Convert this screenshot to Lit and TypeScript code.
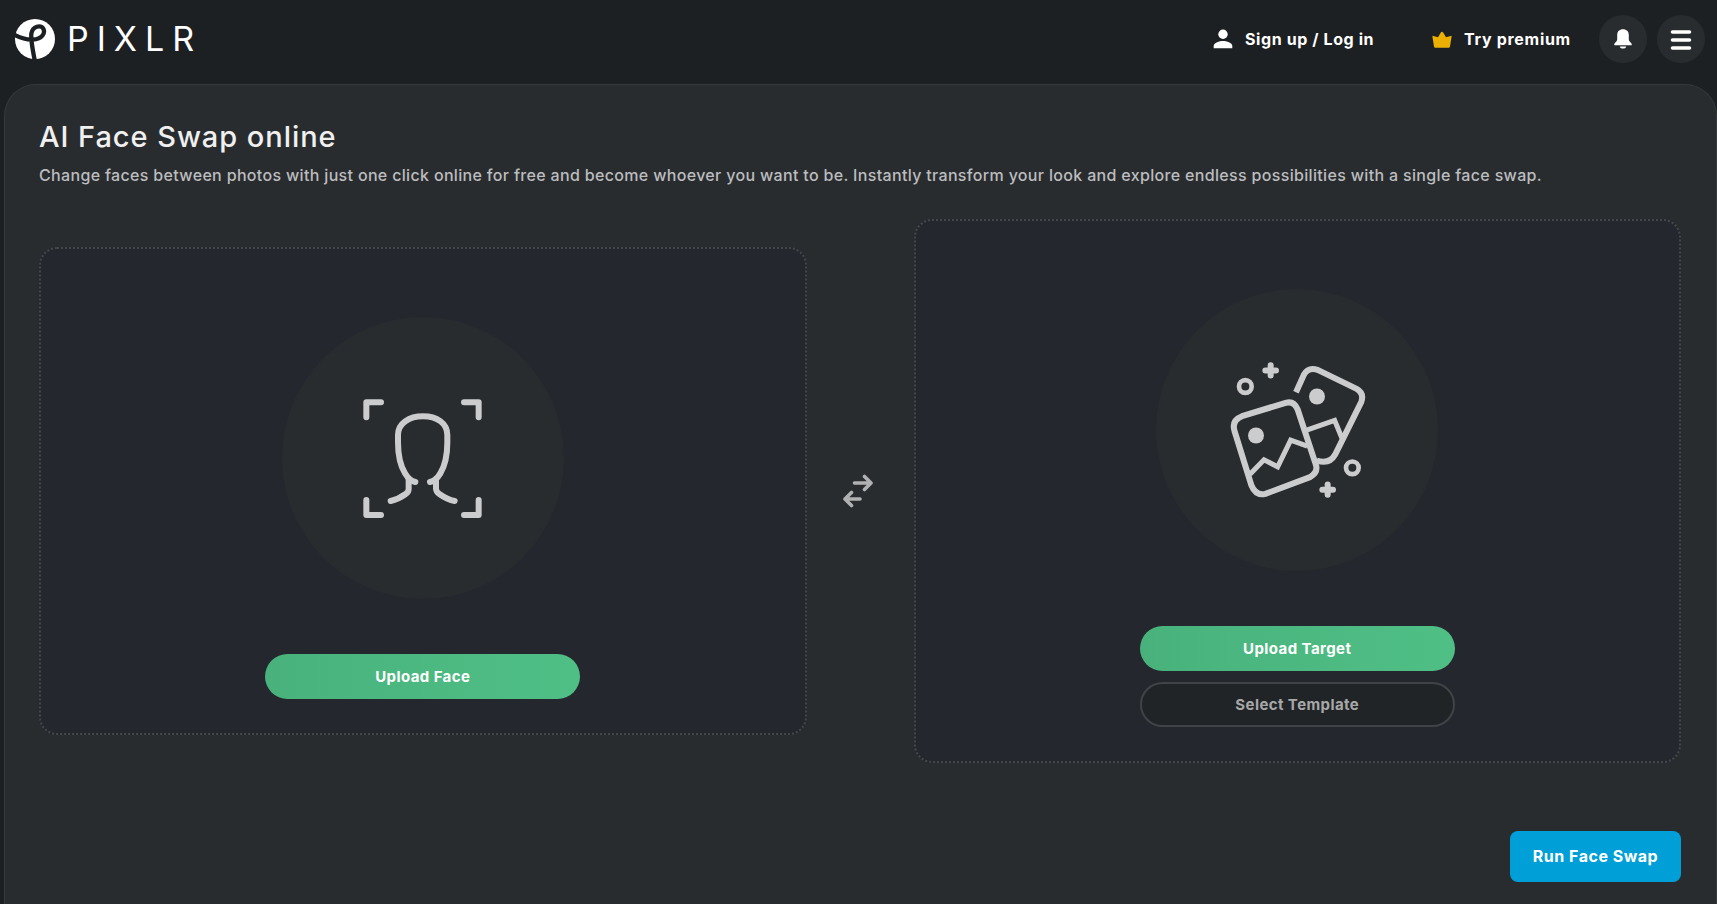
import {html, css, svg, LitElement} from 'lit';
import {customElement, property} from 'lit/decorators.js';

const faceIcon = svg`
<svg class="art" width="120" height="120" viewBox="99 81 360 360">
  <path d="M153 94H109V139M402 94H446V139M109 387V432H153M402 432H446V387"/>
  <path d="M256 333Q238 329 225 307C211 284 204 254 204 214V192C204 156 238 136 279 136C320 136 352 156 352 192V214C352 254 345 284 331 307Q318 329 300 333"/>
  <path d="M236 324V354Q236 363 227 369Q205 385 182 390M318 324V354Q319 363 328 369Q352 386 374 390"/>
</svg>`;

const photosIcon = svg`
<svg class="art" width="140" height="140" viewBox="81 58.5 420 420">
  <path d="M126 227L257 187Q282 180 293 207L347 371Q356 395 330 410L196 460Q167 467 154 434L104 273Q93 240 126 227Z"/>
  <path d="M150 401L192 358L233 379L272 299L322 317" class="miter"/>
  <path d="M288 155L312 102Q325 79 353 88L470 145Q493 158 484 184L405 343Q388 373 350 360" class="butt"/>
  <path d="M320 269L404 240L426 293" class="miter"/>
  <circle class="dot" cx="168" cy="285" r="24"/>
  <circle class="dot" cx="351" cy="168" r="24"/>
  <circle cx="136" cy="138" r="19" class="ring"/>
  <circle cx="457" cy="382" r="19" class="ring"/>
  <path d="M212 74V105M196 90H228M383 432V463M367 448H399"/>
</svg>`;

@customElement('upload-box')
class UploadBox extends LitElement {
  @property() kind = 'face';
  @property() label = '';
  @property() secondary = '';

  static styles = css`
    :host {
      box-sizing: border-box;
      display: flex;
      flex-direction: column;
      align-items: center;
      width: 767.5px;
      padding: 67px 0 34px;
      border: 2px dotted #45484b;
      border-radius: 18px;
      background: #24272e;
    }
    .circle {
      display: flex;
      align-items: center;
      justify-content: center;
      width: 282px;
      height: 282px;
      border-radius: 50%;
      background: #292c2f;
      margin: 1px 0 55px;
    }
    .art {
      fill: none;
      stroke: #cbccce;
      stroke-width: 18;
      stroke-linecap: round;
      stroke-linejoin: round;
    }
    .miter {
      stroke-width: 15;
      stroke-linecap: butt;
      stroke-linejoin: miter;
    }
    .butt {
      stroke-linecap: butt;
    }
    .ring {
      stroke-width: 14;
    }
    .dot {
      fill: #cbccce;
      stroke: none;
    }
    button {
      box-sizing: border-box;
      width: 315px;
      height: 45px;
      padding: 0 0 1px;
      border: none;
      border-radius: 23px;
      font: 700 15px Inter, sans-serif;
      letter-spacing: 0.42px;
      color: #fff;
      background: linear-gradient(90deg, #49b27c, #4fbf86);
    }
    .secondary {
      margin-top: 11px;
      border: 2px solid #414447;
      color: #a7a8a9;
      background: #212427;
    }
  `;

  render() {
    return html`
      <div class="circle">${this.kind === 'face' ? faceIcon : photosIcon}</div>
      <button>${this.label}</button>
      ${this.secondary ? html`<button class="secondary">${this.secondary}</button>` : ''}
    `;
  }
}

@customElement('app-root')
class AppRoot extends LitElement {
  static styles = css`
    :host {
      display: flex;
      flex-direction: column;
      box-sizing: border-box;
      height: 100vh;
      padding-left: 4px;
      overflow: hidden;
      background: #1d2022;
      font-family: Inter, sans-serif;
      color: #fff;
    }
    header {
      display: flex;
      align-items: center;
      flex: none;
      box-sizing: border-box;
      height: 84px;
      padding: 0 12px 6px 10px;
    }
    .logo {
      display: flex;
      align-items: center;
      gap: 11px;
      margin-right: auto;
    }
    .word {
      font-size: 34px;
      font-weight: 400;
      line-height: 40px;
      letter-spacing: 8px;
    }
    .link {
      display: flex;
      align-items: center;
      gap: 12px;
      font-size: 16px;
      font-weight: 700;
      line-height: 20px;
      white-space: nowrap;
    }
    .link span {
      margin-bottom: 1px;
    }
    .signup {
      width: 219px;
      letter-spacing: 0.6px;
    }
    .premium {
      width: 167px;
      letter-spacing: 0.7px;
    }
    .round {
      display: flex;
      align-items: center;
      justify-content: center;
      width: 48px;
      height: 48px;
      border-radius: 50%;
      background: #292c2f;
    }
    .round + .round {
      margin-left: 10px;
    }
    main {
      flex: 1;
      display: flex;
      flex-direction: column;
      padding: 34px 35px 0 34px;
      border: 1px solid #35393b;
      border-bottom: none;
      border-radius: 32px 32px 0 0;
      background: #292c2f;
    }
    h1 {
      margin: 0;
      font-size: 29px;
      font-weight: 500;
      line-height: 36px;
      letter-spacing: 0.95px;
      color: #f0f0f0;
    }
    p {
      margin: 10px 0 0;
      font-size: 16px;
      font-weight: 500;
      line-height: 20px;
      letter-spacing: 0.33px;
      white-space: nowrap;
      color: #bcbdbf;
    }
    .boxes {
      display: flex;
      align-items: center;
      justify-content: space-between;
      margin-top: 34px;
    }
    .swap {
      margin-right: 4px;
    }
    .run {
      align-self: flex-end;
      width: 171px;
      height: 51px;
      margin-top: 68px;
      padding: 0 0 1px;
      border: none;
      border-radius: 8px;
      font: 700 16px Inter, sans-serif;
      letter-spacing: 0.5px;
      color: #fff;
      background: #009fd8;
    }
  `;

  render() {
    return html`
      <header>
        <div class="logo">
          <svg width="42" height="42" viewBox="42 54 126 126">
            <circle cx="105" cy="117" r="60" fill="#fff"/>
            <path d="M42 104Q72 120 98 119C128 118 136 98 130 86C122 74 98 78 94 101C92 122 99 154 104 180" fill="none" stroke="#1d2022" stroke-width="13"/>
          </svg>
          <span class="word">PIXLR</span>
        </div>
        <div class="link signup">
          <svg width="20" height="20" viewBox="0 0 20 20" fill="#fff">
            <circle cx="10" cy="5.3" r="4.7"/>
            <path d="M.7 19.3V17C.7 13.8 6.5 12 10 12S19.3 13.8 19.3 17V19.3Z"/>
          </svg>
          <span>Sign up / Log in</span>
        </div>
        <div class="link premium">
          <svg width="20" height="17" viewBox="0 0 20 17" fill="#ebb000">
            <path d="M2 15.500L.4 5.600Q.3 4.600 1.300 4.900L6 6.300L9 1.300Q10 0 11 1.300L14 6.300L18.700 4.900Q19.700 4.600 19.600 5.600L18 15.500Q17.800 16.700 16.600 16.700H3.400Q2.200 16.700 2 15.500Z"/>
          </svg>
          <span>Try premium</span>
        </div>
        <div class="round">
          <svg width="20" height="20" viewBox="0 0 20 20" fill="#fff">
            <path d="M10 .3C6.500 .3 4.200 2.500 4.200 6V10.500Q4.200 12 2.400 13.600Q.9 15 1.200 15.700Q1.500 16.300 2.300 16.300H17.700Q18.500 16.300 18.800 15.700Q19.100 15 17.600 13.600Q15.800 12 15.800 10.500V6C15.800 2.500 13.500 .3 10 .3ZM6.800 17.500H13.200Q13 19.500 11 19.500H9Q7 19.500 6.800 17.500Z"/>
          </svg>
        </div>
        <div class="round">
          <svg width="22" height="22" viewBox="0 0 22 22" stroke="#fff" stroke-width="3.6" stroke-linecap="round">
            <path d="M2.500 4H19.500M2.500 12H19.500M2.500 20H19.500"/>
          </svg>
        </div>
      </header>
      <main>
        <h1>AI Face Swap online</h1>
        <p>Change faces between photos with just one click online for free and become whoever you want to be. Instantly transform your look and explore endless possibilities with a single face swap.</p>
        <div class="boxes">
          <upload-box kind="face" label="Upload Face"></upload-box>
          <svg class="swap" width="32" height="34" viewBox="0 0 32 34" fill="none" stroke="#b0b1b3" stroke-width="3.6" stroke-linecap="round" stroke-linejoin="round">
            <path d="M12.500 9H29M22.500 2.500L29 9L22.500 15.500M18 25H3M9.500 18.500L3 25L9.500 31.500"/>
          </svg>
          <upload-box kind="photos" label="Upload Target" secondary="Select Template"></upload-box>
        </div>
        <button class="run">Run Face Swap</button>
      </main>
    `;
  }
}
